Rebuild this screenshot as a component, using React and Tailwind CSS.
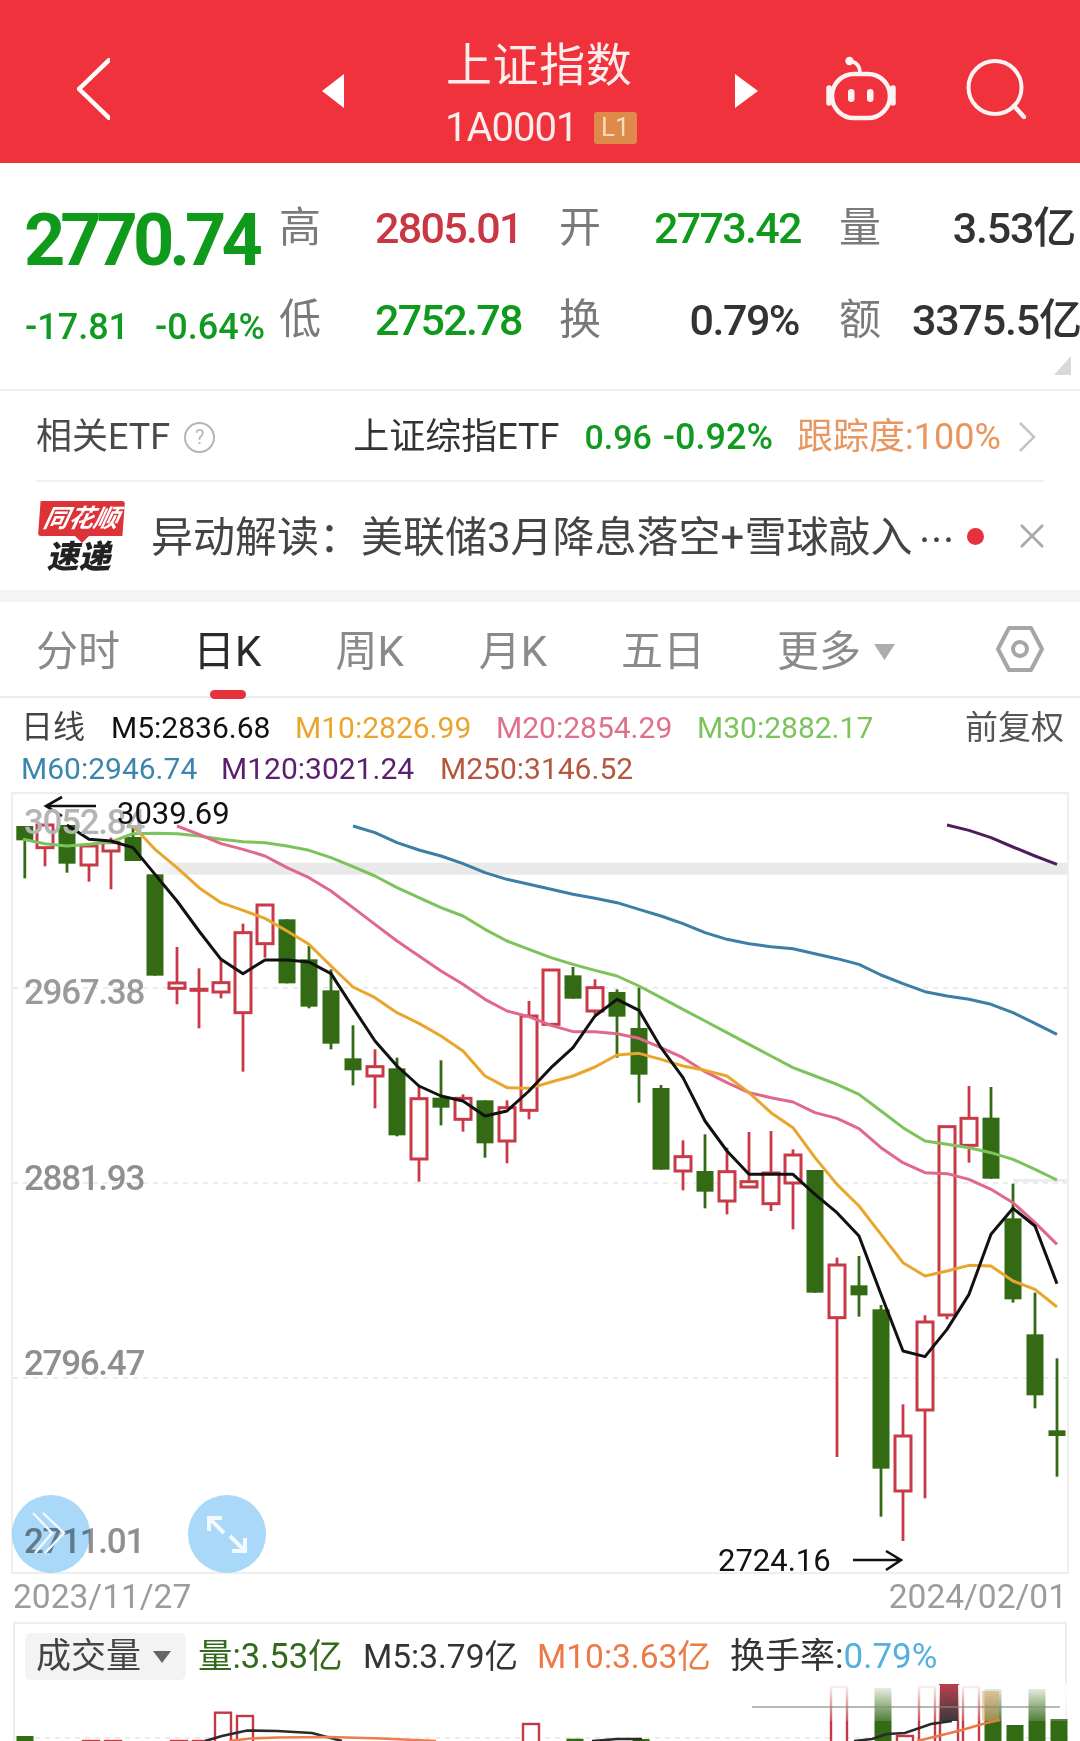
import { Fragment } from 'react'

const X = (i) => 23 + 22 * i
// y values below are read off the crop: page y = 780 + v / 3
const Y = (v) => 780 + v / 3

const candles = [
  ['g', 135, 135, 178, 292], ['r', 132, 132, 200, 256], ['g', 132, 132, 248, 275], ['r', 195, 195, 252, 302],
  ['r', 170, 185, 210, 325], ['g', 140, 168, 240, 240], ['g', 280, 280, 584, 584], ['r', 498, 606, 622, 670],
  ['r', 562, 625, 628, 742], ['r', 535, 605, 633, 652], ['r', 428, 455, 695, 872], ['r', 372, 372, 488, 530],
  ['g', 415, 415, 607, 607], ['g', 495, 535, 677, 682], ['g', 565, 628, 788, 805], ['g', 733, 832, 868, 913],
  ['r', 805, 857, 885, 982], ['g', 830, 862, 1063, 1066], ['r', 915, 953, 1134, 1202], ['g', 838, 950, 980, 1033],
  ['r', 940, 952, 1015, 1052], ['g', 958, 958, 1087, 1130], ['r', 958, 980, 1080, 1147], ['r', 660, 705, 988, 1015],
  ['r', 567, 567, 730, 730], ['g', 558, 583, 653, 653], ['r', 595, 620, 690, 700], ['g', 625, 633, 707, 830],
  ['g', 620, 741, 881, 965], ['g', 912, 921, 1166, 1166], ['r', 1078, 1127, 1170, 1228], ['g', 1060, 1170, 1232, 1282],
  ['r', 1100, 1172, 1260, 1300], ['r', 1053, 1202, 1218, 1220], ['r', 1050, 1176, 1268, 1290], ['r', 1105, 1122, 1206, 1345],
  ['g', 1167, 1167, 1535, 1535], ['r', 1430, 1452, 1610, 2028], ['g', 1425, 1513, 1543, 1607], ['g', 1572, 1585, 2063, 2207],
  ['r', 1870, 1965, 2130, 2280], ['r', 1603, 1623, 1887, 2152], ['r', 1037, 1037, 1602, 1615], ['r', 915, 1012, 1093, 1145],
  ['g', 918, 1010, 1193, 1193], ['g', 1208, 1312, 1555, 1565], ['g', 1535, 1660, 1843, 1882], ['g', 1732, 1948, 1965, 2087],
]

const maLines = [
  { color: '#7cc35c', start: 0, v: [175, 188, 195, 190, 183, 158, 157, 158, 165, 175, 182, 185, 195, 208, 230, 257, 285, 320, 350, 380, 405, 445, 480, 505, 530, 550, 568, 585, 615, 650, 685, 720, 755, 790, 825, 860, 885, 910, 940, 990, 1040, 1080, 1090, 1100, 1115, 1135, 1165, 1197] },
  { color: '#3b7ea6', start: 15, v: [135, 155, 185, 207, 225, 248, 275, 295, 310, 325, 340, 352, 365, 385, 405, 428, 455, 475, 488, 497, 503, 518, 533, 550, 582, 608, 632, 645, 655, 670, 695, 727, 760] },
  { color: '#4f1d5e', start: 42, v: [132, 148, 170, 198, 225, 250] },
  { color: '#e0688a', start: 7, v: [135, 160, 188, 205, 225, 260, 290, 330, 380, 430, 480, 525, 570, 610, 655, 690, 707, 733, 752, 752, 758, 772, 800, 830, 872, 905, 935, 950, 963, 995, 1012, 1043, 1100, 1145, 1175, 1178, 1195, 1225, 1265, 1325, 1390] },
  { color: '#e8a62c', start: 5, v: [135, 205, 260, 320, 365, 388, 412, 450, 490, 555, 618, 650, 695, 727, 765, 810, 885, 920, 922, 903, 885, 858, 822, 817, 835, 855, 868, 885, 935, 995, 1040, 1130, 1210, 1275, 1360, 1445, 1485, 1470, 1453, 1455, 1500, 1525, 1578] },
  { color: '#111111', start: 2, v: [132, 175, 180, 200, 280, 360, 450, 535, 578, 537, 537, 543, 578, 680, 780, 855, 915, 945, 960, 1005, 990, 930, 860, 800, 705, 655, 688, 800, 890, 1020, 1110, 1180, 1180, 1180, 1240, 1295, 1365, 1540, 1710, 1727, 1645, 1540, 1360, 1282, 1335, 1508] },
]

const priceLabels = [
  { text: '3052.84', cls: 'top-[16px] text-[#b4b4b4]' },
  { text: '2967.38', cls: 'top-[186px] text-[#9a9a9a]' },
  { text: '2881.93', cls: 'top-[372px] text-[#8f8f8f]' },
  { text: '2796.47', cls: 'top-[557px] text-[#8f8f8f]' },
  { text: '2711.01', cls: 'top-[735px] text-[#8f8f8f]' },
]

const tabs = [
  { text: '分时', cls: 'text-[#8a8a8a]' },
  { text: '日K', cls: 'ml-[73px] text-[#2a2a2a]', active: true },
  { text: '周K', cls: 'ml-[74px] text-[#8a8a8a]' },
  { text: '月K', cls: 'ml-[75px] text-[#8a8a8a]' },
  { text: '五日', cls: 'ml-[74px] text-[#8a8a8a]' },
  { text: '更多', cls: 'ml-[72px] text-[#8a8a8a]' },
]

function CandleChart() {
  return (
    <svg className="block" width="1054" height="778" viewBox="13 793 1054 778">
      <defs>
        <linearGradient id="bandFade" x1="0" y1="0" x2="1" y2="0">
          <stop offset="0" stopColor="#e9e9e9" stopOpacity="0.3" />
          <stop offset="0.03" stopColor="#e9e9e9" />
        </linearGradient>
      </defs>
      <rect x="155" y={Y(245)} width="912" height="12" fill="url(#bandFade)" />
      <rect x="1013" y="1178" width="54" height="3" fill="#ececec" />
      {[620, 1206, 1790].map((v) => (
        <line key={v} x1="13" x2="1067" y1={Y(v)} y2={Y(v)} stroke="#e6e6e6" strokeWidth="1.5" strokeDasharray="5 5" />
      ))}
      {candles.map(([type, wickTop, bodyTop, bodyBot, wickBot], i) => {
        const color = type === 'g' ? '#336a14' : '#c93a48'
        const cx = i === 0 ? 24.8 : X(i)
        return (
          <Fragment key={i}>
            <line x1={cx} x2={cx} y1={Y(wickTop)} y2={Y(wickBot)} stroke={color} strokeWidth="2.8" />
            {type === 'g' ? (
              <rect x={cx - 8.5} y={Y(bodyTop)} width="17" height={(bodyBot - bodyTop) / 3} fill={color} />
            ) : (
              <rect x={cx - 8} y={Y(bodyTop)} width="16" height={(bodyBot - bodyTop) / 3} fill="#ffffff" stroke={color} strokeWidth="3" />
            )}
          </Fragment>
        )
      })}
      {maLines.map((line) => (
        <polyline
          key={line.color}
          points={line.v.map((v, k) => `${X(line.start + k)},${Y(v)}`).join(' ')}
          fill="none"
          stroke={line.color}
          strokeWidth="3"
          strokeLinejoin="round"
        />
      ))}
      {/* high / low markers */}
      <path d="M96 805H46M62 796L46 805L62 815" fill="none" stroke="#111" strokeWidth="2.6" />
      <path d="M853 1559H901M886 1550L901 1559L886 1569" fill="none" stroke="#111" strokeWidth="2.6" />
    </svg>
  )
}

function VolumeChart() {
  const hollow = [[9, 1711.7], [10, 1715], [23, 1723], [40, 1735], [37, 1686], [41, 1686], [43, 1686], [7, 1740], [8, 1740], [3, 1740], [4, 1740]]
  const solid = [[0, 1735], [6, 1740], [25, 1737.7], [28, 1738], [39, 1687], [44, 1688], [45, 1724], [46, 1688], [47, 1718]]
  return (
    <svg className="block" width="1054" height="58" viewBox="13 1683 1054 58">
      <defs>
        <linearGradient id="smear" x1="0" y1="0" x2="0" y2="1">
          <stop offset="0" stopColor="#ffffff" stopOpacity="0.95" />
          <stop offset="1" stopColor="#ffffff" stopOpacity="0.15" />
        </linearGradient>
        <linearGradient id="smearRed" x1="0" y1="0" x2="0" y2="1">
          <stop offset="0" stopColor="#b8404e" />
          <stop offset="1" stopColor="#3a3a3a" />
        </linearGradient>
      </defs>
      <line x1="13" x2="1067" y1="1736.7" y2="1736.7" stroke="#e6e6e6" strokeWidth="1.5" strokeDasharray="5 5" />
      {solid.map(([i, top]) => (
        <rect key={i} x={X(i) - 8.5} y={top} width="17" height={1741 - top + 2} fill="#336a14" />
      ))}
      {hollow.map(([i, top]) => (
        <rect key={i} x={X(i) - 8} y={top} width="16" height={1741 - top + 4} fill="#ffffff" stroke="#c23a46" strokeWidth="2.4" />
      ))}
      <rect x="938" y="1684" width="18" height="60" fill="#ffffff" stroke="#c23a46" strokeWidth="2.4" />
      <rect x="750" y="1684" width="315" height="36" fill="url(#smear)" />
      <rect x="980" y="1690" width="17" height="30" fill="#dca060" opacity="0.5" />
      <rect x="938" y="1684" width="18" height="36" fill="url(#smearRed)" />
      <line x1="750" x2="1058" y1="1706" y2="1706" stroke="#8a8a8a" strokeWidth="2" opacity="0.6" />
      <polyline points="203,1740 220,1735 245,1729.5 275,1730 310,1732 340,1740" fill="none" stroke="#2a2a2a" strokeWidth="2.6" />
      <polyline points="227,1740 248,1737.5 275,1736.5 327,1736 380,1737.5 434,1740" fill="none" stroke="#e8804e" strokeWidth="2.6" />
      <polyline points="590,1740 615,1738 640,1738" fill="none" stroke="#2a2a2a" strokeWidth="2.6" />
      <polyline points="852,1740 870,1738 885,1733 903,1732 929,1723 950,1720" fill="none" stroke="#2a2a2a" strokeWidth="2.6" />
      <polyline points="915,1740 936,1735 960,1729 984,1722 998,1719" fill="none" stroke="#ec7a47" strokeWidth="2.6" />
    </svg>
  )
}

function Stat({ label, value, valueCls }) {
  return (
    <>
      <span className="text-[42px] font-normal leading-none tracking-normal text-[#7a7a7a]">{label}</span>
      <span className={valueCls}>{value}</span>
    </>
  )
}

export default function App() {
  return (
    <div className="h-[1741px] w-[1080px] overflow-hidden bg-white font-[Roboto,'Noto_Sans_CJK_SC',sans-serif]">
      {/* Header */}
      <div className="flex h-[163px] items-center bg-[#ef323c] pl-[77px] pt-[16px] text-white">
        <svg width="33" height="62" viewBox="0 0 33 62" fill="none" stroke="#fff" strokeWidth="4.5" strokeLinecap="round" strokeLinejoin="round" className="-mt-[2px]">
          <path d="M32 2L2 31L32 60" />
        </svg>
        <svg width="22" height="34" viewBox="0 0 22 34" className="ml-[212px] mt-[2px]"><path d="M22 0V34L0 17Z" fill="#fff" /></svg>
        <div className="ml-[102px] mt-[6px] flex w-[191px] flex-col">
          <div className="text-[46px] leading-[50px] tracking-[0.6px] text-[#fdeeee]">上证指数</div>
          <div className="mt-[20px] flex items-center">
            <span className="-ml-px text-[40px] leading-[36px] tracking-[-1px] text-[#fdeeee]">1A0001</span>
            <span className="ml-[16px] flex h-[32px] w-[47px] items-center justify-center rounded-[3px] bg-[#dd8a4c] text-[26px] text-[#f8dcb4]">L1</span>
          </div>
        </div>
        <svg width="23" height="34" viewBox="0 0 23 34" className="ml-[98px] mt-[2px]"><path d="M0 0V34L23 17Z" fill="#fff" /></svg>
        <svg width="70" height="66" viewBox="826 56 70 66" className="ml-[68px] -mt-[4px]" fill="none" stroke="#fdf3f3">
          <rect x="832" y="75" width="58" height="44" rx="22" strokeWidth="4.5" />
          <path d="M829 89V104M893 89V104" strokeWidth="5.5" strokeLinecap="round" />
          <path d="M860 74C860 66 856 63 850 62" strokeWidth="3.5" strokeLinecap="round" />
          <circle cx="849.5" cy="62" r="4.2" fill="#fdf3f3" stroke="none" />
          <rect x="848" y="90" width="6.5" height="13" rx="3.2" fill="#fdf3f3" stroke="none" />
          <rect x="867" y="90" width="6.5" height="13" rx="3.2" fill="#fdf3f3" stroke="none" />
        </svg>
        <svg width="60" height="60" viewBox="966 61 60 60" className="ml-[70px] -mt-[2px]" fill="none" stroke="#fdf3f3">
          <circle cx="995" cy="89.5" r="26.5" strokeWidth="4" />
          <path d="M1014 108L1024 119" strokeWidth="4.5" strokeLinecap="round" />
        </svg>
      </div>

      {/* Quote block */}
      <div className="relative flex h-[228px] border-b-2 border-[#efefef] pl-[27px] pt-[19px]">
        <div className="w-[252px]">
          <div className="flex h-[92px] items-start pt-[20px]">
            <span className="-ml-[3px] mt-[3px] text-[72px] font-bold leading-[72px] tracking-[-5px] text-[#0f9a1c]">2770.74</span>
          </div>
          <div className="flex h-[92px] items-center pt-[14px] text-[36px] font-medium leading-none text-[#119a22]">
            <span className="-ml-[2px] w-[130px]">-17.81</span>
            <span>-0.64%</span>
          </div>
        </div>
        <div className="grid h-[184px] w-[796px] grid-cols-[96px_184px_95px_145px_113px_163px] grid-rows-[92px_92px] items-center whitespace-nowrap text-[43px] font-medium leading-none tracking-[-1.7px]">
          <Stat label="高" value="2805.01" valueCls="text-[#c93644]" />
          <Stat label="开" value="2773.42" valueCls="text-right text-[#0f9a1c]" />
          <span className="ml-[40px] text-[42px] font-normal tracking-normal text-[#7a7a7a]">量</span>
          <span className="text-right tracking-[-1.2px] text-[#333333]">3.53亿</span>
          <Stat label="低" value="2752.78" valueCls="text-[#0f9a1c]" />
          <Stat label="换" value="0.79%" valueCls="text-right tracking-[-1.5px] text-[#333333]" />
          <span className="ml-[40px] text-[42px] font-normal tracking-normal text-[#7a7a7a]">额</span>
          <span className="text-right tracking-[-1.2px] text-[#333333]">3375.5亿</span>
        </div>
        <div className="absolute bottom-[14px] right-[9px] h-[19px] w-[17px] bg-[#d9d9d9] [clip-path:polygon(100%_0,100%_100%,0_100%)]" />
      </div>

      {/* Related ETF */}
      <div className="mx-[36px] flex h-[91px] items-center border-b-2 border-[#f0f0f0] pt-[3px] text-[36px] leading-none">
        <span className="text-[#4a4a4a]">相关ETF</span>
        <span className="ml-[14px] flex h-[31px] w-[31px] items-center justify-center rounded-full border-2 border-[#b5b5b5] text-[20px] text-[#b5b5b5]">?</span>
        <span className="ml-[138px] text-[#333333]">上证综指ETF</span>
        <span className="ml-[25px] text-[34px] font-medium text-[#119a22]">0.96</span>
        <span className="ml-[11px] font-medium text-[#119a22]">-0.92%</span>
        <span className="ml-[24px] text-[#e9965e]">跟踪度:100%</span>
        <svg width="18" height="30" viewBox="0 0 18 30" className="ml-[17px]" fill="none" stroke="#c4c4c4" strokeWidth="2.5"><path d="M2 1L16 15L2 29" /></svg>
      </div>

      {/* News */}
      <div className="flex h-[108px] items-center pl-[38px]">
        <div className="flex w-[87px] flex-col items-center">
          <div className="relative flex h-[35px] w-[87px] items-center justify-center rounded-[3px] bg-[#dd3338] [clip-path:polygon(3%_0,100%_0,97%_100%,0_100%)]">
            <span className="-skew-x-12 text-[25px] font-bold italic leading-none text-white">同花顺</span>
          </div>
          <svg width="16" height="8" viewBox="0 0 16 8" className="-mt-px"><path d="M0 0H16L8 8Z" fill="#dd3338" /></svg>
          <span className="-skew-x-12 text-[32px] font-black leading-[28px] text-[#222222]">速递</span>
        </div>
        <span className="ml-[26px] mt-[4px] whitespace-nowrap text-[42px] leading-none text-[#444444]">异动解读：美联储3月降息落空+雪球敲入</span>
        <span className="ml-[6px] mt-[4px] font-['Noto_Sans_CJK_SC'] text-[36px] leading-none text-[#444444]">…</span>
        <span className="ml-[13px] h-[17px] w-[17px] rounded-full bg-[#e5323c]" />
        <svg width="24" height="24" viewBox="0 0 24 24" className="ml-[36px]" fill="none" stroke="#a8a8a8" strokeWidth="2.6"><path d="M1 1L23 23M23 1L1 23" /></svg>
      </div>

      <div className="h-[12px] bg-[#f5f5f5]" />

      {/* Period tabs */}
      <div className="flex h-[96px] items-center border-b-2 border-[#ececec] pl-[36px] pt-[6px] text-[42px] leading-none">
        {tabs.map((tab) => (
          <span key={tab.text} className={`relative ${tab.cls}`}>
            {tab.text}
            {tab.active && <span className="absolute -bottom-[26px] left-[17px] h-[9px] w-[36px] rounded-full bg-[#e5323c]" />}
          </span>
        ))}
        <svg width="21" height="16" viewBox="0 0 21 16" className="ml-[13px]"><path d="M0 0H21L10.5 16Z" fill="#acacac" /></svg>
        <svg width="48" height="46" viewBox="996 627 48 46" className="ml-[101px] -mt-[6px]" fill="none" stroke="#a6a6a6" strokeWidth="4" strokeLinejoin="round">
          <path d="M1009 629H1031L1042 650L1031 671H1009L998 650Z" />
          <circle cx="1020" cy="650" r="7" />
        </svg>
      </div>

      {/* MA legend */}
      <div className="h-[96px] px-[21px] pt-[9px] text-[30px] leading-[41px]">
        <div className="flex">
          <span className="w-[90px] text-[32px] text-[#444444]">日线</span>
          <span className="w-[184px] text-[#111111]">M5:2836.68</span>
          <span className="w-[201px] text-[#e8a62c]">M10:2826.99</span>
          <span className="w-[201px] text-[#e0708a]">M20:2854.29</span>
          <span className="text-[#7cc35c]">M30:2882.17</span>
          <span className="-mr-[5px] ml-auto text-[33px] text-[#555555]">前复权</span>
        </div>
        <div className="flex">
          <span className="w-[200px] text-[#3b86ae]">M60:2946.74</span>
          <span className="w-[219px] text-[#5a1e6e]">M120:3021.24</span>
          <span className="text-[#b5573f]">M250:3146.52</span>
        </div>
      </div>

      {/* Candles */}
      <div className="relative ml-[13px] h-[778px] w-[1054px] outline-2 outline-[#eeeeee]">
        <CandleChart />
        {priceLabels.map((label) => (
          <span key={label.text} className={`absolute left-[11px] text-[35px] font-medium leading-[26px] tracking-[-1.3px] ${label.cls}`}>
            {label.text}
          </span>
        ))}
        <span className="absolute left-[104px] top-[7px] text-[31px] leading-[26px] text-[#111111]">3039.69</span>
        <span className="absolute left-[705px] top-[754px] text-[31px] leading-[26px] text-[#111111]">2724.16</span>
        <div className="absolute left-[-1px] top-[701px] h-[78px] w-[78px]">
          <div className="absolute inset-0 rounded-full bg-[#a9d8f8] mix-blend-multiply" />
          <svg width="78" height="78" viewBox="0 0 78 78" className="absolute inset-0" fill="none" stroke="#f2f9ff" strokeWidth="2.4">
            <path d="M21 18L40 38L23 58M31 18L52 38L33 58" />
          </svg>
        </div>
        <div className="absolute left-[175px] top-[701px] h-[78px] w-[78px]">
          <div className="absolute inset-0 rounded-full bg-[#a9d8f8]" />
          <svg width="78" height="78" viewBox="0 0 78 78" className="absolute inset-0" fill="none" stroke="#f2f9ff" strokeWidth="4">
            <path d="M36 38L21 23M21 36V23H34M42 41L57 56M57 43V56H44" />
          </svg>
        </div>
      </div>

      {/* Date axis */}
      <div className="mx-[13px] flex h-[50px] items-center justify-between text-[33.5px] leading-none text-[#9c9c9c]">
        <span>2023/11/27</span>
        <span>2024/02/01</span>
      </div>

      {/* Volume */}
      <div className="ml-[13px] w-[1054px] border-x-2 border-t-2 border-[#eeeeee]">
        <div className="flex h-[60px] items-start pl-[10px] pt-[9px] text-[33.5px] leading-none">
          <div className="flex h-[47px] w-[161px] items-center rounded-[6px] bg-[#f3f3f3] pl-[11px] text-[35px] text-[#444444]">
            成交量
            <svg width="18" height="12" viewBox="0 0 18 12" className="ml-[12px]"><path d="M0 0H18L9 12Z" fill="#666666" /></svg>
          </div>
          <div className="flex h-[47px] items-center whitespace-nowrap">
            <span className="ml-[12px] w-[165px] text-[34.5px] text-[#33691a]">量:3.53亿</span>
            <span className="w-[174px] text-[#333333]">M5:3.79亿</span>
            <span className="w-[193px] text-[#ec7a47]">M10:3.63亿</span>
            <span className="text-[35px] text-[#333333]">换手率:</span>
            <span className="text-[35px] text-[#55b0e0]">0.79%</span>
          </div>
        </div>
        <VolumeChart />
      </div>
    </div>
  )
}
